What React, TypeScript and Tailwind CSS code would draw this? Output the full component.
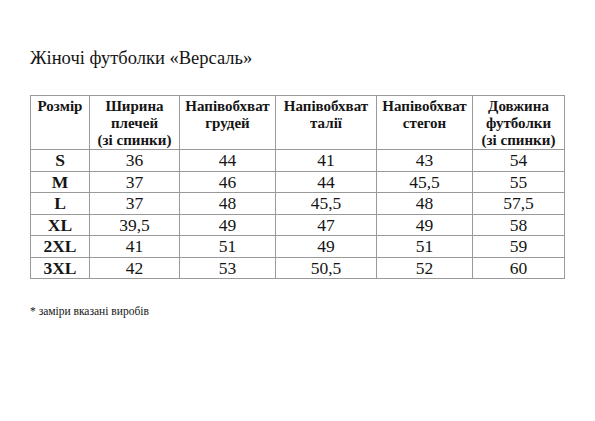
import React from 'react';

const headers = [
  ['Розмір'],
  ['Ширина', 'плечей', '(зі спинки)'],
  ['Напівобхват', 'грудей'],
  ['Напівобхват', 'талії'],
  ['Напівобхват', 'стегон'],
  ['Довжина', 'футболки', '(зі спинки)'],
];

const widths = ['w-[59px]', 'w-[90px]', 'w-[96px]', 'w-[101px]', 'w-[96px]', 'w-[92px]'];

const rows: string[][] = [
  ['S', '36', '44', '41', '43', '54'],
  ['M', '37', '46', '44', '45,5', '55'],
  ['L', '37', '48', '45,5', '48', '57,5'],
  ['XL', '39,5', '49', '47', '49', '58'],
  ['2XL', '41', '51', '49', '51', '59'],
  ['3XL', '42', '53', '50,5', '52', '60'],
];

export default function App() {
  return (
    <div className="w-[595px] h-[421px] bg-white text-[#151515] pl-[30px] pt-[47px] [font-family:'Liberation_Serif',serif]">
      <h1 className="text-[18.5px] leading-[22px]">Жіночі футболки «Версаль»</h1>

      <table className="mt-[26px] border-collapse table-fixed w-[535px]">
        <thead>
          <tr>
            {headers.map((lines, i) => (
              <th
                key={i}
                className={`${widths[i]} h-[54px] border border-[#9a9a9a] align-top pt-[2px] text-[15px] leading-[17px] font-bold text-center`}
              >
                {lines.map((l) => (
                  <div key={l}>{l}</div>
                ))}
              </th>
            ))}
          </tr>
        </thead>
        <tbody>
          {rows.map((r) => (
            <tr key={r[0]} className="h-[21.5px]">
              {r.map((c, i) => (
                <td
                  key={i}
                  className={`border border-[#9a9a9a] text-center text-[17.5px] leading-[20px] p-0 ${i === 0 ? 'font-bold' : ''}`}
                >
                  {c}
                </td>
              ))}
            </tr>
          ))}
        </tbody>
      </table>

      <p className="mt-[25px] text-[11.5px] leading-[14px]">* заміри вказані виробів</p>
    </div>
  );
}
